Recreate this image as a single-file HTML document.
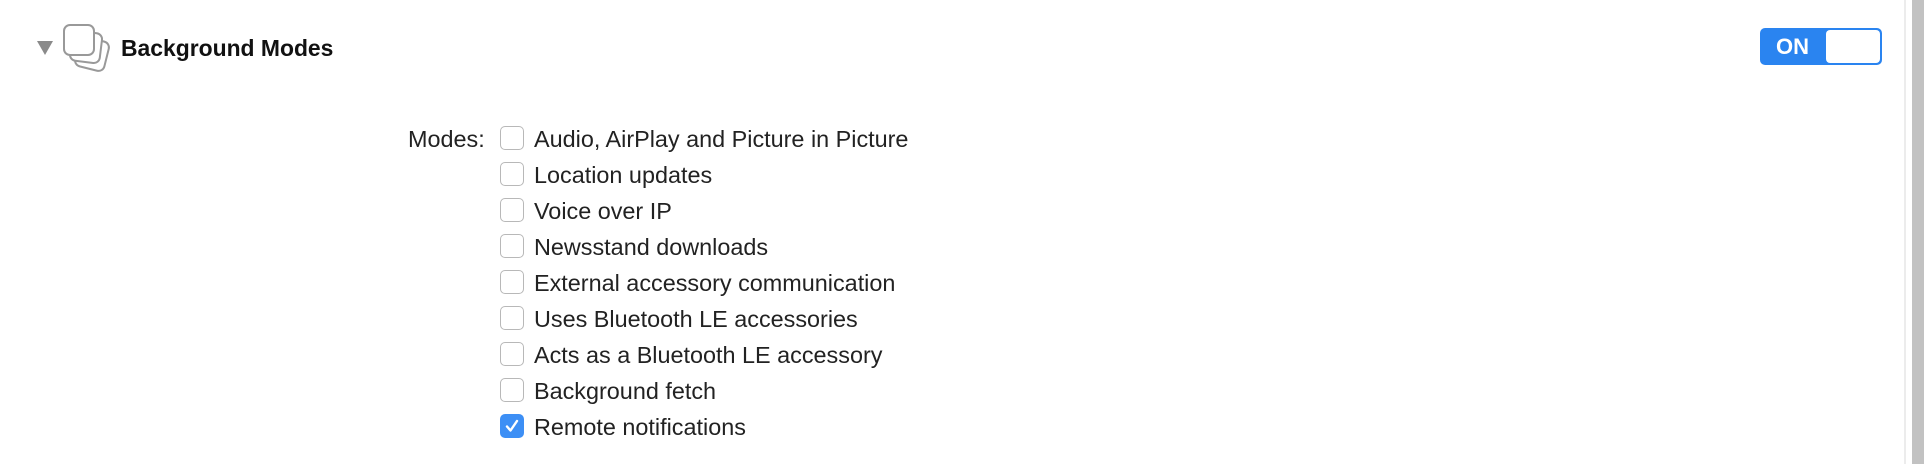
<!DOCTYPE html>
<html><head><style>
body{margin:0;width:1924px;height:464px;background:#fff;position:relative;overflow:hidden;font-family:"Liberation Sans",sans-serif;color:#222}
.t{position:absolute;font-size:23.4px;line-height:26px;white-space:nowrap}
.cb{position:absolute;left:500px;width:22px;height:22px;border:1px solid #b8b8b8;border-radius:5px;background:#fff;box-sizing:content-box}
</style></head><body>
<svg style="position:absolute;left:36px;top:38px" width="20" height="20">
<polygon points="1,3 17,3 9,17" fill="#8a8a8a"/>
</svg>
<svg style="position:absolute;left:56px;top:18px" width="64" height="60">
<rect x="21" y="21" width="30" height="30" rx="6" transform="rotate(14 36 36)" fill="#fff" stroke="#999" stroke-width="2"/>
<rect x="15" y="14" width="30" height="30" rx="6" transform="rotate(7 30 29)" fill="#fff" stroke="#999" stroke-width="2"/>
<rect x="8" y="7" width="30" height="30" rx="6" fill="#fff" stroke="#999" stroke-width="2"/>
</svg>
<div class="t" style="left:121px;top:35px;font-weight:bold;color:#111;font-size:22.9px">Background Modes</div>
<div style="position:absolute;left:1760px;top:28px;width:122px;height:37px;background:#2a84f0;border-radius:5px"></div>
<div style="position:absolute;left:1826px;top:30px;width:54px;height:33px;background:#fff;border-radius:4px"></div>
<div style="position:absolute;left:1776px;top:35px;color:#fff;font-weight:bold;font-size:22px;line-height:24px">ON</div>
<div style="position:absolute;left:1904px;top:0;width:2px;height:464px;background:#ececec"></div>
<div style="position:absolute;left:1912px;top:0;width:12px;height:464px;background:#c2c2c2"></div>
<div class="t" style="left:408px;top:126px">Modes:</div>
<div class="cb" style="top:126px"></div><div class="t" style="left:534px;top:126px">Audio, AirPlay and Picture in Picture</div>
<div class="cb" style="top:162px"></div><div class="t" style="left:534px;top:162px">Location updates</div>
<div class="cb" style="top:198px"></div><div class="t" style="left:534px;top:198px">Voice over IP</div>
<div class="cb" style="top:234px"></div><div class="t" style="left:534px;top:234px">Newsstand downloads</div>
<div class="cb" style="top:270px"></div><div class="t" style="left:534px;top:270px">External accessory communication</div>
<div class="cb" style="top:306px"></div><div class="t" style="left:534px;top:306px">Uses Bluetooth LE accessories</div>
<div class="cb" style="top:342px"></div><div class="t" style="left:534px;top:342px">Acts as a Bluetooth LE accessory</div>
<div class="cb" style="top:378px"></div><div class="t" style="left:534px;top:378px">Background fetch</div>
<div class="cb" style="top:414px;background:#3d8ff5;border-color:#3d8ff5"><svg width="22" height="22"><path d="M6 11.5 L9.5 15.5 L16 6" fill="none" stroke="#fff" stroke-width="2.4" stroke-linecap="round" stroke-linejoin="round"/></svg></div>
<div class="t" style="left:534px;top:414px">Remote notifications</div>
</body></html>
